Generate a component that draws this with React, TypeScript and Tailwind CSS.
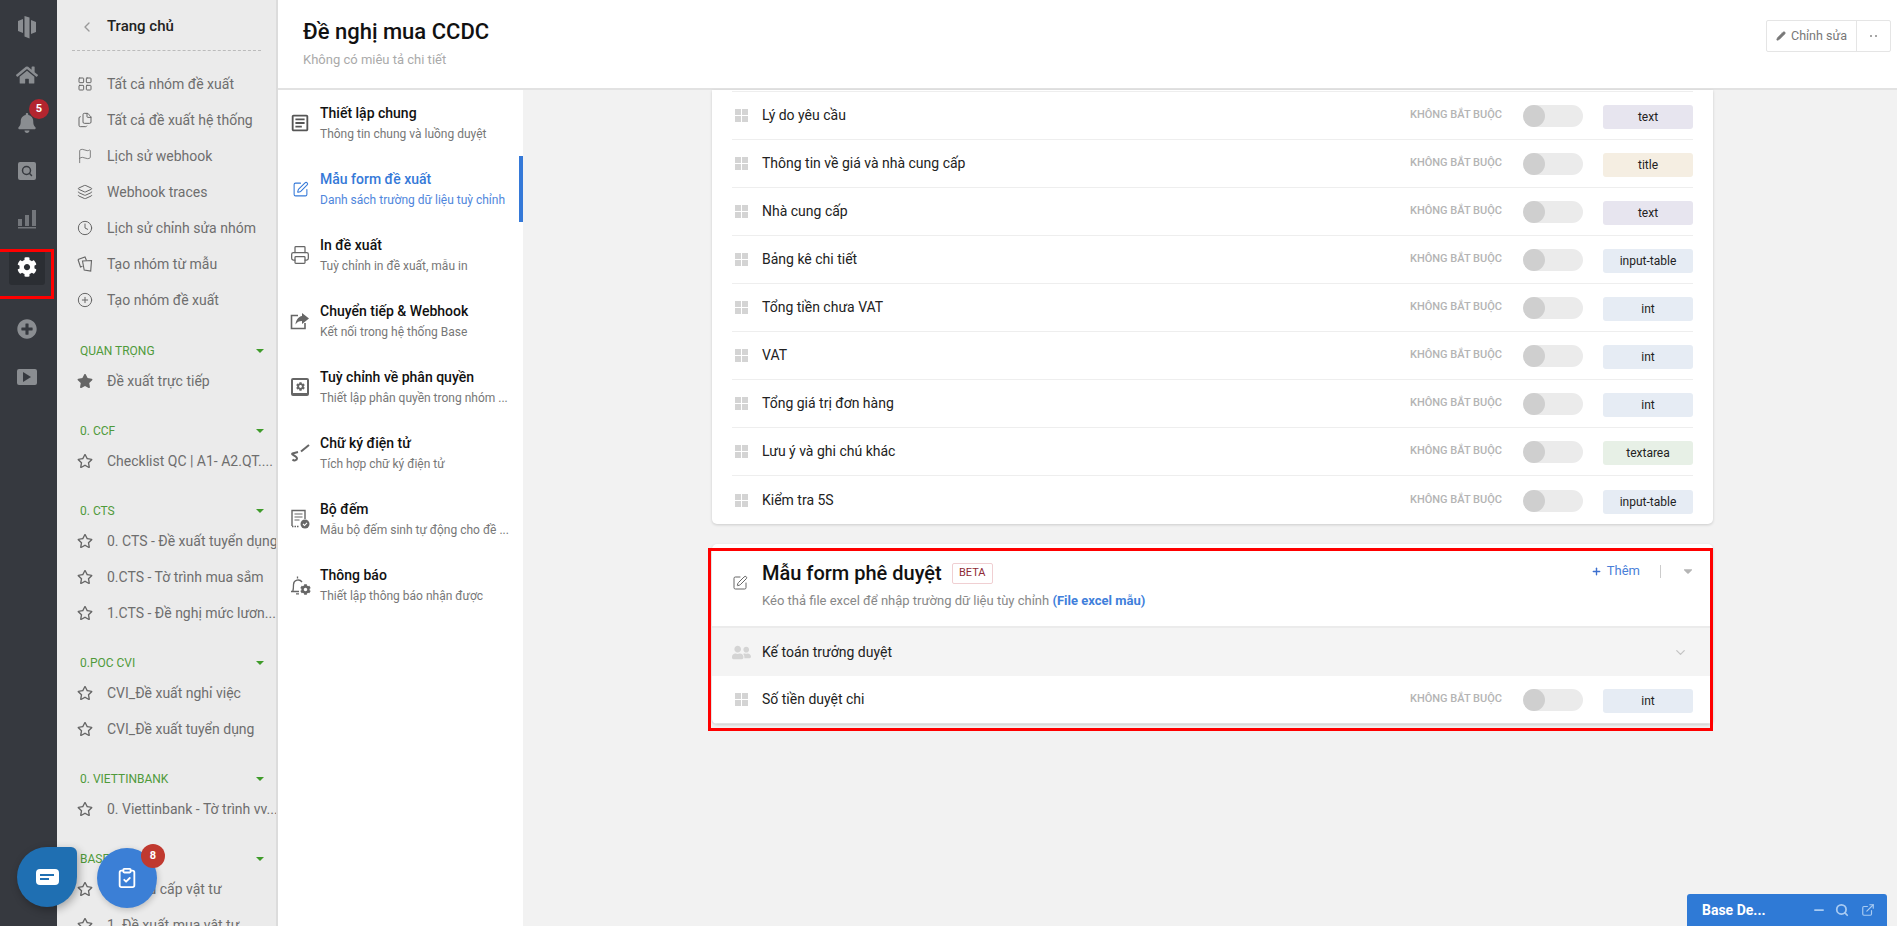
import React from 'react';
import {
  ChevronLeft,
  ChevronDown,
  LayoutGrid,
  Files,
  Flag,
  Layers,
  Clock,
  CirclePlus,
  SquarePen,
  Printer,
  Plus,
  Search,
  ExternalLink,
  Minus,
  Pencil,
  ClipboardCheck,
} from 'lucide-react';
import { FaHome, FaBell, FaCog, FaPlusCircle, FaStar, FaRegStar, FaUserFriends, FaCaretDown } from 'react-icons/fa';
import { MdOutlineArticle } from 'react-icons/md';

const FONT = "font-['Roboto','Noto_Sans',sans-serif]";

function Logo() {
  return (
    <svg width="20" height="24" viewBox="0 0 20 24" fill="#8a8d91">
      <path d="M1 6l5-2v14l-5-2z" />
      <path d="M7.5 1l5 1.500v21l-5-2z" />
      <path d="M14 5l5 2v10l-5 2z" />
    </svg>
  );
}

function RailSearch() {
  return (
    <div className="flex h-[18px] w-[18px] items-center justify-center rounded-[2px] bg-[#8a8d91]">
      <Search size={12} strokeWidth={3} color="#36393f" />
    </div>
  );
}

function RailChart() {
  return (
    <svg width="20" height="20" viewBox="0 0 20 20" fill="#73767b">
      <rect x="1" y="10" width="4" height="7" />
      <rect x="8" y="6" width="4" height="11" />
      <rect x="15" y="1" width="4" height="16" />
      <rect x="1" y="18" width="18" height="1.500" />
    </svg>
  );
}

function RailPlay() {
  return (
    <div className="flex h-[16px] w-[20px] items-center justify-center rounded-[2px] bg-[#8a8d91]">
      <div className="h-0 w-0 border-y-[5px] border-l-[8px] border-y-transparent border-l-[#36393f]" />
    </div>
  );
}

function TemplateIcon() {
  return (
    <svg width="16" height="16" viewBox="0 0 16 16" fill="none" stroke="#666" strokeWidth="1.100">
      <path d="M1 3.500L8 1l1.500 3.500" />
      <path d="M1 3.500l2.500 7.500 2-.7" />
      <path d="M5.500 5l9-.5-.8 10.500-6.500-1z" />
    </svg>
  );
}

function Grip() {
  return (
    <div className="grid h-[13px] w-[13px] grid-cols-2 gap-[1px]">
      <div className="bg-[#d4d4d4]" />
      <div className="bg-[#d4d4d4]" />
      <div className="bg-[#d4d4d4]" />
      <div className="bg-[#d4d4d4]" />
    </div>
  );
}

function ForwardIcon() {
  return (
    <svg width="20" height="18" viewBox="0 0 20 18" fill="none">
      <path d="M8 3.500H1.500V16.500H15V11" stroke="#666" strokeWidth="1.600" />
      <path d="M12 1l7 5.500-7 5.500V9c-3 0-5 1-6.500 3.500C6 8 8.500 4.500 12 4z" fill="#666" />
    </svg>
  );
}

function PermissionIcon() {
  return (
    <div className="flex h-[18px] w-[18px] items-center justify-center rounded-[2px] border-2 border-[#666] border-b-[3px]">
      <FaCog size={9} color="#666" />
    </div>
  );
}

function SignIcon() {
  return (
    <svg width="20" height="18" viewBox="0 0 20 18" fill="none" stroke="#666" strokeWidth="2">
      <path d="M19 1l-8 6.500" />
      <path d="M8 8L2.500 9.500C0.500 10.500 7 12 7 14.500c0 2-3 2.500-4.500 1" />
    </svg>
  );
}

function CounterIcon() {
  return (
    <svg width="19" height="20" viewBox="0 0 19 20" fill="none">
      <path d="M1 17V1.500h13V10" stroke="#666" strokeWidth="1.400" />
      <path d="M3.500 5h8M3.500 8h8M3.500 11h5" stroke="#666" strokeWidth="1.200" />
      <path d="M1 17.500h7" stroke="#666" strokeWidth="1.400" strokeDasharray="1.500 1" />
      <circle cx="14" cy="15" r="4.500" fill="#666" />
      <path d="M12 15l1.500 1.500 2.500-2.700" stroke="#fff" strokeWidth="1.100" />
    </svg>
  );
}

function BellGearIcon() {
  return (
    <div className="relative h-[21px] w-[21px]">
      <svg width="21" height="21" viewBox="0 0 21 21" fill="none" stroke="#666" strokeWidth="1.300">
        <path d="M1 16.500h8M2.800 16.500C3.500 14 3.500 12 3.500 9.500a4.700 4.700 0 0 1 8.500-2.500" />
        <path d="M7.500 1.500v2M6 18.800h3" />
      </svg>
      <FaCog size={11} color="#666" className="absolute left-[10px] top-[9px]" />
    </div>
  );
}

const menu = [
  { name: 'Tất cả nhóm đề xuất', icon: <LayoutGrid size={16} strokeWidth={1.5} /> },
  { name: 'Tất cả đề xuất hệ thống', icon: <Files size={16} strokeWidth={1.5} /> },
  { name: 'Lịch sử webhook', icon: <Flag size={16} strokeWidth={1.2} /> },
  { name: 'Webhook traces', icon: <Layers size={16} strokeWidth={1.5} /> },
  { name: 'Lịch sử chỉnh sửa nhóm', icon: <Clock size={16} strokeWidth={1.5} /> },
  { name: 'Tạo nhóm từ mẫu', icon: <TemplateIcon /> },
  { name: 'Tạo nhóm đề xuất', icon: <CirclePlus size={16} strokeWidth={1.5} /> },
];

const groups = [
  { title: 'QUAN TRỌNG', solid: true, items: ['Đề xuất trực tiếp'] },
  { title: '0. CCF', items: ['Checklist QC | A1- A2.QT....'] },
  { title: '0. CTS', items: ['0. CTS - Đề xuất tuyển dụng', '0.CTS - Tờ trình mua sắm', '1.CTS - Đề nghị mức lươn...'] },
  { title: '0.POC CVI', items: ['CVI_Đề xuất nghỉ việc', 'CVI_Đề xuất tuyển dụng'] },
  { title: '0. VIETTINBANK', items: ['0. Viettinbank - Tờ trình vv...'] },
  { title: 'BASE', items: ['Yêu cầu cấp vật tư', '1. Đề xuất mua vật tư'] },
];

const tabs = [
  { title: 'Thiết lập chung', sub: 'Thông tin chung và luồng duyệt', icon: <MdOutlineArticle size={22} color="#555" /> },
  { title: 'Mẫu form đề xuất', sub: 'Danh sách trường dữ liệu tuỳ chỉnh', icon: <SquarePen size={17} color="#3579d8" strokeWidth={1.5} />, active: true },
  { title: 'In đề xuất', sub: 'Tuỳ chỉnh in đề xuất, mẫu in', icon: <Printer size={20} color="#666" strokeWidth={1.5} /> },
  { title: 'Chuyển tiếp & Webhook', sub: 'Kết nối trong hệ thống Base', icon: <ForwardIcon /> },
  { title: 'Tuỳ chỉnh về phân quyền', sub: 'Thiết lập phân quyền trong nhóm ...', icon: <PermissionIcon /> },
  { title: 'Chữ ký điện tử', sub: 'Tích hợp chữ ký điện tử', icon: <SignIcon /> },
  { title: 'Bộ đếm', sub: 'Mẫu bộ đếm sinh tự động cho đề ...', icon: <CounterIcon /> },
  { title: 'Thông báo', sub: 'Thiết lập thông báo nhận được', icon: <BellGearIcon /> },
];

const fields = [
  { name: 'Lý do yêu cầu', type: 'text' },
  { name: 'Thông tin về giá và nhà cung cấp', type: 'title' },
  { name: 'Nhà cung cấp', type: 'text' },
  { name: 'Bảng kê chi tiết', type: 'input-table' },
  { name: 'Tổng tiền chưa VAT', type: 'int' },
  { name: 'VAT', type: 'int' },
  { name: 'Tổng giá trị đơn hàng', type: 'int' },
  { name: 'Lưu ý và ghi chú khác', type: 'textarea' },
  { name: 'Kiểm tra 5S', type: 'input-table' },
];

const tagColors: Record<string, string> = {
  text: 'bg-[#e7e5ef]',
  title: 'bg-[#f5eee2]',
  'input-table': 'bg-[#e6ecf4]',
  int: 'bg-[#e6ecf4]',
  textarea: 'bg-[#e7f0e6]',
};

function FieldRow({ name, type, last }: { name: string; type: string; last?: boolean }) {
  return (
    <div className={`mx-[20px] flex h-[48px] items-center ${last ? '' : 'border-b border-[#eeeeee]'}`}>
      <div className="ml-[3px] mr-[14px] w-[13px]">
        <Grip />
      </div>
      <span className="flex-1 text-[14px] text-[#222]">{name}</span>
      <span className="mr-[21px] text-[11px] font-medium text-[#b4b4b4]">KHÔNG BẮT BUỘC</span>
      <div className="mr-[20px] mt-[1px] h-[22px] w-[60px] rounded-full bg-[#ebebeb]">
        <div className="h-[22px] w-[22px] rounded-full bg-[#cfcfcf]" />
      </div>
      <div className={`mt-[3px] flex h-[24px] w-[90px] items-center justify-center rounded-[3px] text-[12px] text-[#222] ${tagColors[type]}`}>
        {type}
      </div>
    </div>
  );
}

function RailItem({ children, className = '' }: { children: React.ReactNode; className?: string }) {
  return <div className={`flex h-[48px] w-full items-center justify-center pr-[3px] ${className}`}>{children}</div>;
}

export default function App() {
  return (
    <div className={`relative flex h-[926px] w-full overflow-hidden bg-[#f2f2f2] ${FONT}`}>
      {/* rail */}
      <div className="flex w-[57px] shrink-0 flex-col items-center bg-[#36393f] pt-[3px] text-[#8a8d91]">
        <RailItem><Logo /></RailItem>
        <RailItem><FaHome size={22} /></RailItem>
        <RailItem className="relative">
          <FaBell size={20} />
          <span className="absolute left-[29px] top-[0px] flex h-[20px] w-[20px] items-center justify-center rounded-full bg-[#b3252f] text-[11px] font-bold text-white">5</span>
        </RailItem>
        <RailItem><RailSearch /></RailItem>
        <RailItem><RailChart /></RailItem>
        <RailItem>
          <div className="flex h-[36px] w-[36px] items-center justify-center rounded-[3px] bg-[#2b2e33] text-white">
            <FaCog size={20} />
          </div>
        </RailItem>
        <RailItem className="mt-[14px]"><FaPlusCircle size={20} /></RailItem>
        <RailItem><RailPlay /></RailItem>
      </div>

      {/* second sidebar */}
      <div className="w-[221px] shrink-0 overflow-hidden border-r-2 border-[#dcdcdc] bg-[#ebebeb] text-[14px] text-[#6e6e6e]">
        <div className="mx-[15px] flex h-[51px] items-center border-b border-dashed border-[#bbbbbb] pt-[3px]">
          <ChevronLeft size={16} className="ml-[7px] text-[#999]" />
          <span className="ml-[12px] text-[15px] font-medium text-[#222]">Trang chủ</span>
        </div>
        <div className="mt-[15px] mb-[21px]">
          {menu.map((m) => (
            <div key={m.name} className="flex h-[36px] items-center pl-[20px]">
              <span className="flex w-[16px] items-center justify-center text-[#666]">{m.icon}</span>
              <span className="ml-[14px]">{m.name}</span>
            </div>
          ))}
        </div>
        {groups.map((g) => (
          <div key={g.title} className="mb-[20px]">
            <div className="flex h-[24px] items-center justify-between pl-[23px] pr-[12px] text-[12px] text-[#4f9a3a]">
              <span>{g.title}</span>
              <div className="h-0 w-0 border-x-[4px] border-t-[4px] border-x-transparent border-t-[#3f9b2a]" />
            </div>
            {g.items.map((name) => (
              <div key={name} className="flex h-[36px] items-center pl-[20px]">
                <span className="flex w-[16px] items-center justify-center text-[#666]">
                  {g.solid ? <FaStar size={16} /> : <FaRegStar size={16} />}
                </span>
                <span className="ml-[14px] whitespace-nowrap">{name}</span>
              </div>
            ))}
          </div>
        ))}
      </div>

      {/* main */}
      <div className="flex min-w-0 flex-1 flex-col">
        <div className="flex h-[90px] shrink-0 items-start justify-between border-b-2 border-[#e2e2e2] bg-white pl-[25px] pr-[6px]">
          <div>
            <div className="mt-[17px] text-[22px] font-medium leading-[30px] text-[#111]">Đề nghị mua CCDC</div>
            <div className="mt-[3px] text-[13px] text-[#aaaaaa]">Không có miêu tả chi tiết</div>
          </div>
          <div className="mt-[20px] flex h-[32px] rounded-[2px] border border-[#e5e5e5] text-[12.5px] text-[#777]">
            <div className="flex w-[90px] items-center justify-center gap-[5px] border-r border-[#e5e5e5]">
              <Pencil size={10} fill="#777" />
              <span>Chỉnh sửa</span>
            </div>
            <div className="flex w-[33px] items-center justify-center gap-[3px]">
              <span className="h-[2px] w-[2px] rounded-full bg-[#888]" />
              <span className="h-[2px] w-[2px] rounded-full bg-[#888]" />
            </div>
          </div>
        </div>

        <div className="flex min-h-0 flex-1">
          {/* tabs */}
          <div className="w-[245px] shrink-0 bg-white">
            {tabs.map((t) => (
              <div key={t.title} className={`flex h-[66px] items-center ${t.active ? 'border-r-4 border-[#3579d8]' : ''}`}>
                <span className="flex w-[42px] shrink-0 justify-center pl-[2px]">{t.icon}</span>
                <div className="min-w-0 pb-[1px]">
                  <div className={`text-[14px] font-medium leading-[20px] ${t.active ? 'text-[#3579d8]' : 'text-[#111]'}`}>{t.title}</div>
                  <div className={`mt-[2px] whitespace-nowrap text-[12px] leading-[18px] ${t.active ? 'text-[#4f86dc]' : 'text-[#777]'}`}>{t.sub}</div>
                </div>
              </div>
            ))}
          </div>

          {/* content */}
          <div className="min-w-0 flex-1 pl-[189px]">
            <div className="w-[1001px] rounded-b-[5px] bg-white pt-[1px] shadow-[0_1px_3px_rgba(0,0,0,0.16)]">
              <div className="mx-[20px] h-[1px] bg-[#eeeeee]" />
              {fields.map((f, i) => (
                <FieldRow key={f.name} name={f.name} type={f.type} last={i === fields.length - 1} />
              ))}
            </div>

            <div className="mt-[20px] w-[1001px] overflow-hidden rounded-[5px] bg-white shadow-[0_1px_3px_rgba(0,0,0,0.16)]">
              <div className="flex h-[84px] border-b-2 border-[#ebebeb] pl-[20px] pr-[18px]">
                <SquarePen size={16} strokeWidth={1.5} color="#666" className="mt-[31px]" />
                <div className="ml-[14px] mt-[16px]">
                  <div className="flex items-center">
                    <span className="text-[20px] font-medium leading-[26px] text-[#111]">Mẫu form phê duyệt</span>
                    <span className="ml-[10px] flex h-[21px] w-[41px] items-center justify-center rounded-[2px] border border-[#f0cfd2] text-[11px] text-[#8e2a35]">BETA</span>
                  </div>
                  <div className="mt-[5px] text-[13px] text-[#888]">
                    Kéo thả file excel để nhập trường dữ liệu tùy chỉnh <span className="font-bold text-[#3f7fdb]">(File excel mẫu)</span>
                  </div>
                </div>
                <div className="ml-auto mt-[19px] flex h-[16px] items-center">
                  <Plus size={11} strokeWidth={3} color="#3d6fce" />
                  <span className="ml-[5px] text-[13px] text-[#4a7fd9]">Thêm</span>
                  <span className="ml-[20px] h-[13px] w-[1px] bg-[#cccccc]" />
                  <FaCaretDown size={14} color="#b5b5b5" className="ml-[20px]" />
                </div>
              </div>
              <div className="flex h-[48px] items-center bg-[#f4f4f4] pl-[20px] pr-[25px]">
                <FaUserFriends size={19} color="#d4d4d4" />
                <span className="ml-[11px] flex-1 text-[14px] text-[#222]">Kế toán trưởng duyệt</span>
                <ChevronDown size={15} color="#c4c4c4" />
              </div>
              <div className="flex h-[48px] items-center border-b border-[#e2e2e2] pl-[20px] pr-[20px]">
                <div className="ml-[3px] w-[13px]"><Grip /></div>
                <span className="ml-[14px] flex-1 text-[14px] text-[#222]">Số tiền duyệt chi</span>
                <span className="mr-[21px] text-[11px] font-medium text-[#b4b4b4]">KHÔNG BẮT BUỘC</span>
                <div className="mr-[20px] mt-[1px] h-[22px] w-[60px] rounded-full bg-[#ebebeb]">
                  <div className="h-[22px] w-[22px] rounded-full bg-[#cfcfcf]" />
                </div>
                <div className="mt-[3px] flex h-[24px] w-[90px] items-center justify-center rounded-[3px] bg-[#e6ecf4] text-[12px] text-[#222]">int</div>
              </div>
            </div>
          </div>
        </div>
      </div>

      {/* annotations */}
      <div className="pointer-events-none absolute left-[-4px] top-[249px] h-[50px] w-[58px] border-[3px] border-[#ff0000]" />
      <div className="pointer-events-none absolute left-[708px] top-[548px] h-[183px] w-[1005px] border-[3px] border-[#ff0000]" />

      {/* floating buttons */}
      <div className="absolute left-[17px] top-[847px] flex h-[60px] w-[60px] items-center justify-center rounded-[30px] rounded-tr-[6px] bg-[#1f6fb2] shadow-[2px_3px_8px_rgba(0,0,0,0.3)]">
        <div className="flex h-[16px] w-[23px] flex-col justify-center gap-[2px] rounded-[4px] bg-white pl-[4px]">
          <div className="h-[2px] w-[14px] bg-[#1f6fb2]" />
          <div className="h-[2px] w-[9px] bg-[#1f6fb2]" />
        </div>
      </div>
      <div className="absolute left-[97px] top-[848px] flex h-[60px] w-[60px] items-center justify-center rounded-full bg-[#3b7fd6] shadow-[1px_2px_6px_rgba(0,0,0,0.2)]">
        <ClipboardCheck size={22} color="white" strokeWidth={2} />
        <span className="absolute left-[44px] top-[-4px] flex h-[24px] w-[24px] items-center justify-center rounded-full bg-[#c0392f] text-[11px] font-bold text-white">8</span>
      </div>
      <div className="absolute bottom-0 left-[1687px] flex h-[32px] w-[200px] items-center rounded-t-[3px] bg-[#2f7ad6] pl-[15px] pr-[12px] text-white">
        <span className="flex-1 text-[14px] font-bold">Base De...</span>
        <Minus size={14} strokeWidth={3} color="#a9cbf2" />
        <Search size={14} strokeWidth={3} color="#a9cbf2" className="ml-[9px]" />
        <ExternalLink size={14} strokeWidth={2} color="#a9cbf2" className="ml-[12px]" />
      </div>
    </div>
  );
}
